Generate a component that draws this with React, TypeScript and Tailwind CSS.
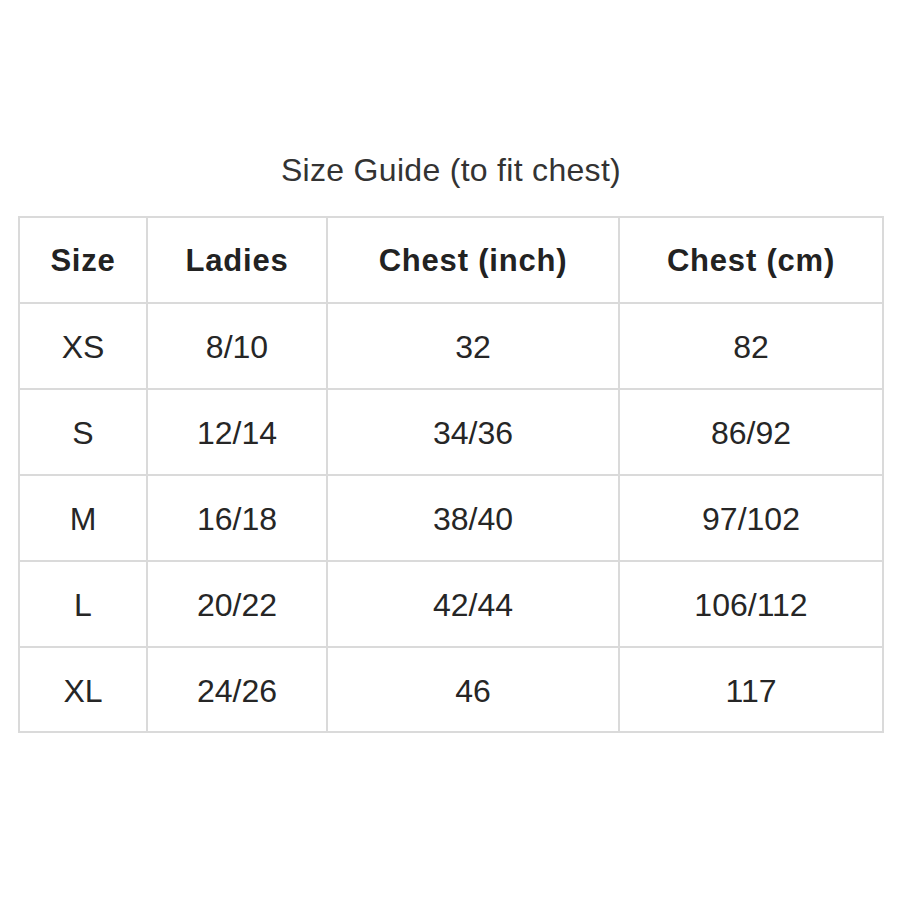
const rows = [
  ['XS', '8/10', '32', '82'],
  ['S', '12/14', '34/36', '86/92'],
  ['M', '16/18', '38/40', '97/102'],
  ['L', '20/22', '42/44', '106/112'],
  ['XL', '24/26', '46', '117'],
];

const widths = ['w-[128px]', 'w-[180px]', 'w-[292px]', 'w-[264px]'];

export default function App() {
  return (
    <div className="w-[900px] h-[900px] bg-white text-[#222] font-[family-name:Liberation_Sans,Arial,sans-serif] pt-[150px] pl-[18px]">
      <div className="w-[866px] text-center text-[32px] leading-[40px] text-[#333] tracking-[0.3px] mb-[26px]">Size Guide (to fit chest)</div>
      <table className="border-collapse table-fixed w-[866px]">
        <thead>
          <tr className="h-[86px]">
            {['Size', 'Ladies', 'Chest (inch)', 'Chest (cm)'].map((h, i) => (
              <th key={h} className={`${widths[i]} border-2 border-[#dadada] text-[31px] tracking-[0.8px] font-bold text-center pt-[2px]`}>{h}</th>
            ))}
          </tr>
        </thead>
        <tbody>
          {rows.map((r) => (
            <tr key={r[0]} className="h-[86px] last:h-[85px]">
              {r.map((c, i) => (
                <td key={i} className="border-2 border-[#dadada] text-[32px] text-center text-[#262626] pt-[2px]">{c}</td>
              ))}
            </tr>
          ))}
        </tbody>
      </table>
    </div>
  );
}
